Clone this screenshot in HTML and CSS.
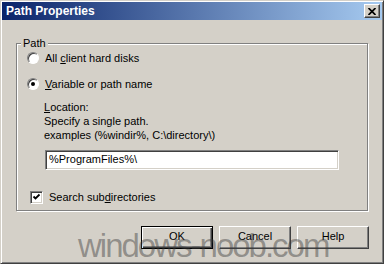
FILE: index.html
```html
<html>
    <head>
        <link rel="stylesheet" href="styles.css">
    </head>
    <body>
        <div class="window">
            <div class="titlebar">
                <span class="title">Path Properties</span>
                <span class="close-btn">
                    <svg width="8" height="7" viewBox="0 0 8 7">
                        <path d="M0.5 0 L7.5 7 M7.5 0 L0.5 7" stroke="#000" stroke-width="1.7"/>
                    </svg>
                </span>
            </div>

            <div class="dialog-body">
                <fieldset class="group">
                    <legend>Path</legend>

                    <div class="option option-first">
                        <span class="radio"></span>
                        <span>All <u>c</u>lient hard disks</span>
                    </div>
                    <div class="option option-second">
                        <span class="radio checked"></span>
                        <span><u>V</u>ariable or path name</span>
                    </div>

                    <div class="details">
                        <div><u>L</u>ocation:</div>
                        <div>Specify a single path.</div>
                        <div>examples (%windir%, C:\directory\)</div>
                    </div>

                    <div class="textbox">%ProgramFiles%\</div>

                    <div class="check-row">
                        <span class="checkbox">
                            <svg width="9" height="9" viewBox="0 0 9 9">
                                <path d="M1.5 3.5 L3.5 5.5 L7.5 1.5" fill="none" stroke="#000" stroke-width="1.8"/>
                            </svg>
                        </span>
                        <span>Search sub<u>d</u>irectories</span>
                    </div>
                </fieldset>

                <div class="buttons">
                    <div class="btn btn-default">OK</div>
                    <div class="btn">Cancel</div>
                    <div class="btn">Help</div>
                </div>
            </div>

            <div class="watermark">windows-noob.com</div>
        </div>
    </body>
</html>
```

FILE: styles.css
```css
body {
  margin: 0;
  background: #d4d0c8;
  font-family: "Liberation Sans", Arial, sans-serif;
  font-size: 11px;
  color: #000;
}

.window {
  position: relative;
  box-sizing: border-box;
  width: 384px;
  height: 264px;
  padding: 1px;
  border: 1px solid;
  border-color: #d4d0c8 #404040 #404040 #d4d0c8;
  box-shadow: inset 1px 1px 0 #fff, inset -1px -1px 0 #808080;
  overflow: hidden;
}

.titlebar {
  display: flex;
  align-items: center;
  justify-content: space-between;
  height: 18px;
  padding: 0 2px 0 4px;
  background: linear-gradient(to right, #0a246a, #a6caf0);
}

.title {
  color: #fff;
  font-weight: bold;
  font-size: 12px;
}

.close-btn {
  display: flex;
  align-items: center;
  justify-content: center;
  box-sizing: border-box;
  width: 16px;
  height: 14px;
  background: #d4d0c8;
  border: 1px solid;
  border-color: #fff #404040 #404040 #fff;
  box-shadow: inset -1px -1px 0 #808080;
}

.dialog-body {
  padding: 16px 13px 0 14px;
}

.group {
  box-sizing: border-box;
  width: 352px;
  margin: 0;
  padding: 0 0 6px 0;
  border: 1px solid #808080;
  box-shadow: inset 1px 1px 0 #fff, 1px 1px 0 #fff;
}

.group legend {
  margin-left: 4px;
  padding: 0 2px;
  line-height: 14px;
  background: #d4d0c8;
}

.option {
  display: flex;
  align-items: center;
  gap: 6px;
  height: 14px;
  padding-left: 10px;
}

.option-first {
  margin-top: 1px;
}

.option-second {
  margin-top: 12px;
}

.radio {
  position: relative;
  box-sizing: border-box;
  width: 12px;
  height: 12px;
  border-radius: 50%;
  border: 1px solid;
  border-color: #808080 #fff #fff #808080;
  background: #fff;
  box-shadow: inset 1px 1px 0 #404040;
}

.radio.checked::after {
  content: "";
  position: absolute;
  left: 3px;
  top: 3px;
  width: 4px;
  height: 4px;
  border-radius: 50%;
  background: #000;
}

.details {
  margin: 9px 0 0 27px;
  line-height: 14px;
}

.textbox {
  box-sizing: border-box;
  width: 294px;
  height: 20px;
  margin: 8px 0 0 28px;
  padding: 0 3px;
  line-height: 16px;
  background: #fff;
  border: 1px solid;
  border-color: #808080 #fff #fff #808080;
  box-shadow: inset 1px 1px 0 #404040, inset -1px -1px 0 #d4d0c8;
}

.check-row {
  display: flex;
  align-items: center;
  gap: 6px;
  height: 14px;
  margin-top: 20px;
  padding-left: 13px;
}

.checkbox {
  display: flex;
  align-items: center;
  justify-content: center;
  box-sizing: border-box;
  width: 13px;
  height: 13px;
  background: #fff;
  border: 1px solid;
  border-color: #808080 #fff #fff #808080;
  box-shadow: inset 1px 1px 0 #404040, inset -1px -1px 0 #d4d0c8;
}

.buttons {
  display: flex;
  justify-content: flex-end;
  gap: 6px;
  width: 353px;
  margin-top: 15px;
}

.btn {
  box-sizing: border-box;
  width: 72px;
  height: 23px;
  line-height: 19px;
  text-align: center;
  background: #d4d0c8;
  border: 1px solid;
  border-color: #fff #404040 #404040 #fff;
  box-shadow: inset -1px -1px 0 #808080;
}

.btn-default {
  border-color: #000;
  box-shadow: inset 1px 1px 0 #fff, inset -1px -1px 0 #404040, inset -2px -2px 0 #808080;
}

.watermark {
  position: absolute;
  left: 77px;
  top: 226px;
  font-size: 33px;
  letter-spacing: -2px;
  color: rgba(60, 60, 60, 0.45);
  white-space: nowrap;
}
```
